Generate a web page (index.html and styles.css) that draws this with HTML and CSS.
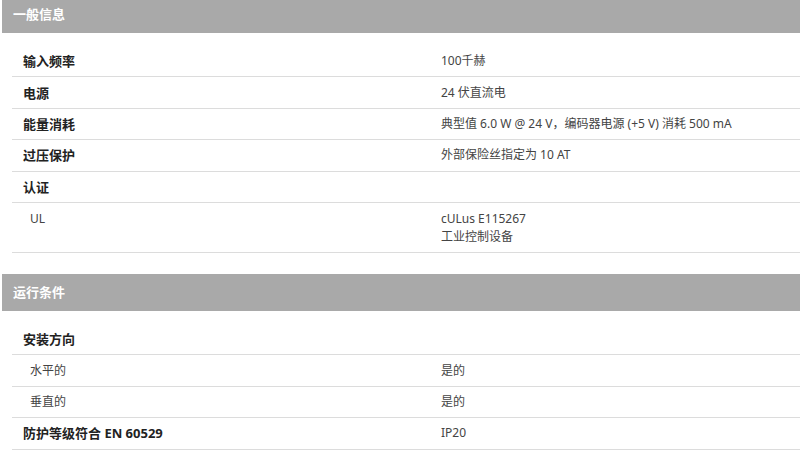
FILE: index.html
```html
<!DOCTYPE html>
<html lang="zh">
<head>
<meta charset="utf-8">
<link rel="stylesheet" href="styles.css">
</head>
<body>
<div class="page">
  <section class="group first">
    <div class="group-head">一般信息</div>
    <div class="rows">
      <div class="row"><div class="label">输入频率</div><div class="value">100千赫</div></div>
      <div class="row"><div class="label">电源</div><div class="value">24 伏直流电</div></div>
      <div class="row"><div class="label">能量消耗</div><div class="value">典型值 6.0 W @ 24 V，编码器电源 (+5 V) 消耗 500 mA</div></div>
      <div class="row"><div class="label">过压保护</div><div class="value">外部保险丝指定为 10 AT</div></div>
      <div class="row"><div class="label">认证</div><div class="value"></div></div>
      <div class="row tall"><div class="label sub">UL</div><div class="value">cULus E115267<br>工业控制设备</div></div>
    </div>
  </section>
  <section class="group">
    <div class="group-head">运行条件</div>
    <div class="rows">
      <div class="row"><div class="label">安装方向</div><div class="value"></div></div>
      <div class="row"><div class="label sub">水平的</div><div class="value">是的</div></div>
      <div class="row"><div class="label sub">垂直的</div><div class="value">是的</div></div>
      <div class="row"><div class="label">防护等级符合 EN 60529</div><div class="value">IP20</div></div>
    </div>
  </section>
</div>
</body>
</html>
```

FILE: styles.css
```css
html, body {
  margin: 0;
  padding: 0;
  background: #ffffff;
  overflow: hidden;
}
body {
  font-family: "Noto Sans", "Noto Sans CJK SC", sans-serif;
  color: #333333;
}
.page {
  padding-left: 2px;
  margin-top: -4px;
}
.group + .group {
  margin-top: 21px;
}
.group-head {
  height: 37px;
  background: #a9a9a9;
  color: #ffffff;
  font-weight: bold;
  font-size: 13px;
  line-height: 37px;
  padding-left: 11px;
}
.rows {
  margin-left: 10px;
  margin-top: 13px;
}
.row {
  display: grid;
  grid-template-columns: 429px 1fr;
  align-items: center;
  height: 30.4px;
  border-bottom: 1px solid #dcdcdc;
}
.row.tall {
  height: 49px;
  align-items: start;
  padding-top: 7px;
  box-sizing: border-box;
  height: 50px;
}
.label {
  padding-left: 11px;
  font-weight: bold;
  font-size: 13px;
  line-height: 18px;
  color: #222222;
}
.label.sub {
  padding-left: 18px;
  font-weight: normal;
  font-size: 12px;
  color: #444444;
}
.value {
  font-size: 12px;
  line-height: 18px;
  color: #444444;
}
```
